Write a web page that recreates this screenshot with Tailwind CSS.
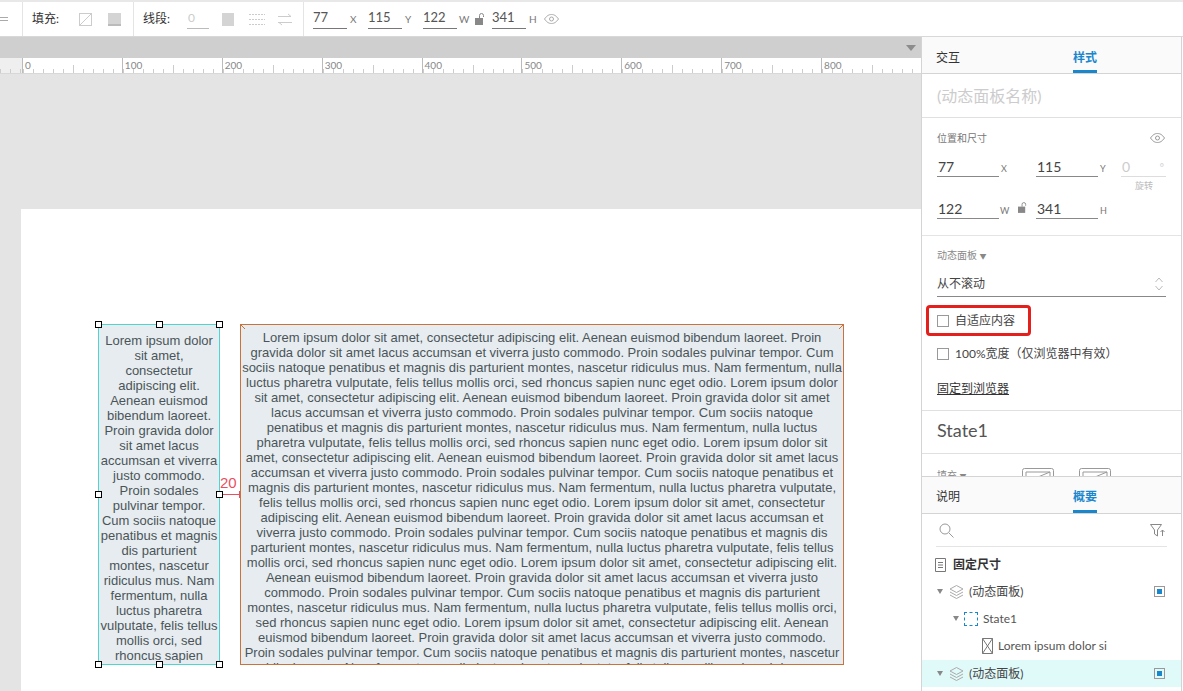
<!DOCTYPE html>
<html lang="zh-CN">
  <head>
    <meta charset="UTF-8" />
    <title>固定尺寸</title>
    <script src="https://cdn.jsdelivr.net/npm/@tailwindcss/browser@4"></script>
  </head>
  <body class="w-[1183px] h-[691px] overflow-hidden bg-white font-['Lato','Noto_Sans_CJK_SC',sans-serif] text-[#333]">
    <!-- toolbar -->
    <div class="h-[37px] border-t-2 border-t-[#e8e8e8] border-b border-b-[#d8d8d8] flex items-center text-[12px]">
      <div class="w-[23px] h-full border-r border-[#e4e4e4] flex flex-col justify-center gap-[2px]">
        <div class="w-[8px] h-px bg-[#aaa]"></div>
        <div class="w-[8px] h-px bg-[#aaa]"></div>
      </div>
      <div class="w-[111px] h-full border-r border-[#e4e4e4] flex items-center pl-[9px]">
        <span class="w-[47px]">填充:</span>
        <svg class="w-[13px] h-[13px]" viewBox="0 0 13 13"><rect x=".5" y=".5" width="12" height="12" fill="none" stroke="#ccc"/><path d="M1 12 12 1" stroke="#ccc"/></svg>
        <div class="w-[13px] h-[13px] ml-[16px] bg-[#d4d4d4] border-b-2 border-[#bbb]"></div>
      </div>
      <div class="w-[170px] h-full border-r border-[#e4e4e4] flex items-center pl-[9px]">
        <span class="w-[44px]">线段:</span>
        <div class="w-[22px] h-[19px] border-b border-[#bbb] text-[#ccc] leading-[15px] pl-[1px]">0</div>
        <div class="w-[12px] h-[13px] ml-[13px] bg-[#d4d4d4]"></div>
        <svg class="w-[16px] h-[13px] ml-[15px]" viewBox="0 0 16 13"><path d="M0 1.5h16M0 6.5h16M0 11.5h16" stroke="#ccc" stroke-dasharray="2 1"/></svg>
        <svg class="w-[14px] h-[13px] ml-[13px]" viewBox="0 0 14 13" fill="none" stroke="#ccc"><path d="M0 3.5h13M10 1l3 2.5M0 9.5h14M1 9.5l3 2.5"/></svg>
      </div>
      <div class="flex items-center pl-[9px] text-[#555] text-[13px]">
        <div class="w-[34px] h-[20px] border-b border-[#777] leading-[16px]">77</div>
        <span class="w-[21px] pl-[3px] text-[10px] text-[#777]">X</span>
        <div class="w-[34px] h-[20px] border-b border-[#777] leading-[16px]">115</div>
        <span class="w-[21px] pl-[3px] text-[10px] text-[#777]">Y</span>
        <div class="w-[34px] h-[20px] border-b border-[#777] leading-[16px]">122</div>
        <span class="w-[18px] pl-[2px] text-[10px] text-[#777]">W</span>
        <svg class="w-[10px] h-[12px] mr-[7px]" viewBox="0 0 10 12"><rect x="0" y="5" width="8" height="7" fill="#888"/><path d="M4.5 5V2.5a2 2 0 0 1 4 0V4" fill="none" stroke="#888"/></svg>
        <div class="w-[34px] h-[20px] border-b border-[#777] leading-[16px]">341</div>
        <span class="w-[18px] pl-[3px] text-[10px] text-[#777]">H</span>
        <svg class="w-[15px] h-[10px]" viewBox="0 0 15 10" fill="none" stroke="#aaa"><path d="M.5 5C3 1.5 5 .5 7.500 .5S12 1.500 14.500 5C12 8.500 10 9.500 7.500 9.500S3 8.500 .5 5Z"/><circle cx="7.500" cy="5" r="2"/></svg>
      </div>
    </div>

    <div class="flex h-[654px]">
      <!-- canvas side -->
      <div class="w-[922px] flex flex-col border-r border-[#d4d4d4]">
        <div class="h-[21px] bg-[#cfcfcf] flex justify-end items-center pr-[5px]">
          <div class="w-0 h-0 border-x-[5px] border-x-transparent border-t-[6px] border-t-[#8c8c8c]"></div>
        </div>
        <!-- ruler -->
        <div class="h-[16px] flex border-b border-[#d8d8d8] text-[10px] text-[#888] leading-[14px]">
          <div class="w-[22px] bg-[#efefef] bg-[repeating-linear-gradient(90deg,#ccc_0,#ccc_1px,transparent_1px,transparent_10px)] bg-[length:100%_4px] bg-bottom bg-no-repeat"></div>
          <div class="w-[100px] pl-[2px] border-l border-[#bbb] bg-[linear-gradient(#ccc,#ccc),repeating-linear-gradient(90deg,#ccc_0,#ccc_1px,transparent_1px,transparent_10px)] bg-[length:1px_8px,100%_4px] bg-[position:50px_bottom,left_bottom] bg-no-repeat">0</div>
          <div class="w-[100px] pl-[2px] border-l border-[#bbb] bg-[linear-gradient(#ccc,#ccc),repeating-linear-gradient(90deg,#ccc_0,#ccc_1px,transparent_1px,transparent_10px)] bg-[length:1px_8px,100%_4px] bg-[position:50px_bottom,left_bottom] bg-no-repeat">100</div>
          <div class="w-[100px] pl-[2px] border-l border-[#bbb] bg-[linear-gradient(#ccc,#ccc),repeating-linear-gradient(90deg,#ccc_0,#ccc_1px,transparent_1px,transparent_10px)] bg-[length:1px_8px,100%_4px] bg-[position:50px_bottom,left_bottom] bg-no-repeat">200</div>
          <div class="w-[100px] pl-[2px] border-l border-[#bbb] bg-[linear-gradient(#ccc,#ccc),repeating-linear-gradient(90deg,#ccc_0,#ccc_1px,transparent_1px,transparent_10px)] bg-[length:1px_8px,100%_4px] bg-[position:50px_bottom,left_bottom] bg-no-repeat">300</div>
          <div class="w-[100px] pl-[2px] border-l border-[#bbb] bg-[linear-gradient(#ccc,#ccc),repeating-linear-gradient(90deg,#ccc_0,#ccc_1px,transparent_1px,transparent_10px)] bg-[length:1px_8px,100%_4px] bg-[position:50px_bottom,left_bottom] bg-no-repeat">400</div>
          <div class="w-[100px] pl-[2px] border-l border-[#bbb] bg-[linear-gradient(#ccc,#ccc),repeating-linear-gradient(90deg,#ccc_0,#ccc_1px,transparent_1px,transparent_10px)] bg-[length:1px_8px,100%_4px] bg-[position:50px_bottom,left_bottom] bg-no-repeat">500</div>
          <div class="w-[100px] pl-[2px] border-l border-[#bbb] bg-[linear-gradient(#ccc,#ccc),repeating-linear-gradient(90deg,#ccc_0,#ccc_1px,transparent_1px,transparent_10px)] bg-[length:1px_8px,100%_4px] bg-[position:50px_bottom,left_bottom] bg-no-repeat">600</div>
          <div class="w-[100px] pl-[2px] border-l border-[#bbb] bg-[linear-gradient(#ccc,#ccc),repeating-linear-gradient(90deg,#ccc_0,#ccc_1px,transparent_1px,transparent_10px)] bg-[length:1px_8px,100%_4px] bg-[position:50px_bottom,left_bottom] bg-no-repeat">700</div>
          <div class="w-[100px] pl-[2px] border-l border-[#bbb] bg-[linear-gradient(#ccc,#ccc),repeating-linear-gradient(90deg,#ccc_0,#ccc_1px,transparent_1px,transparent_10px)] bg-[length:1px_8px,100%_4px] bg-[position:50px_bottom,left_bottom] bg-no-repeat">800</div>
        </div>
        <!-- page area -->
        <div class="flex-1 bg-[#e4e4e4] pt-[135px] pl-[21px]">
          <div class="relative h-[482px] bg-white overflow-hidden font-['Liberation_Sans',sans-serif] text-[13px] leading-[15px] text-[#4b5459] text-center">
            <!-- selected panel -->
            <div class="absolute left-[77px] top-[115px] w-[122px] h-[341px] bg-[#e6ecef] border border-[#4dd6cf] pt-[8px] overflow-hidden whitespace-nowrap">
              Lorem ipsum dolor<br>sit amet,<br>consectetur<br>adipiscing elit.<br>Aenean euismod<br>bibendum laoreet.<br>Proin gravida dolor<br>sit amet lacus<br>accumsan et viverra<br>justo commodo.<br>Proin sodales<br>pulvinar tempor.<br>Cum sociis natoque<br>penatibus et magnis<br>dis parturient<br>montes, nascetur<br>ridiculus mus. Nam<br>fermentum, nulla<br>luctus pharetra<br>vulputate, felis tellus<br>mollis orci, sed<br>rhoncus sapien
            </div>
            <!-- wide panel -->
            <div class="absolute left-[219px] top-[115px] w-[604px] h-[341px] bg-[#e6ecef] border border-[#c8733c] pt-[5px] overflow-hidden whitespace-nowrap">
              Lorem ipsum dolor sit amet, consectetur adipiscing elit. Aenean euismod bibendum laoreet. Proin<br>
              gravida dolor sit amet lacus accumsan et viverra justo commodo. Proin sodales pulvinar tempor. Cum<br>
              sociis natoque penatibus et magnis dis parturient montes, nascetur ridiculus mus. Nam fermentum, nulla<br>
              luctus pharetra vulputate, felis tellus mollis orci, sed rhoncus sapien nunc eget odio. Lorem ipsum dolor<br>
              sit amet, consectetur adipiscing elit. Aenean euismod bibendum laoreet. Proin gravida dolor sit amet<br>
              lacus accumsan et viverra justo commodo. Proin sodales pulvinar tempor. Cum sociis natoque<br>
              penatibus et magnis dis parturient montes, nascetur ridiculus mus. Nam fermentum, nulla luctus<br>
              pharetra vulputate, felis tellus mollis orci, sed rhoncus sapien nunc eget odio. Lorem ipsum dolor sit<br>
              amet, consectetur adipiscing elit. Aenean euismod bibendum laoreet. Proin gravida dolor sit amet lacus<br>
              accumsan et viverra justo commodo. Proin sodales pulvinar tempor. Cum sociis natoque penatibus et<br>
              magnis dis parturient montes, nascetur ridiculus mus. Nam fermentum, nulla luctus pharetra vulputate,<br>
              felis tellus mollis orci, sed rhoncus sapien nunc eget odio. Lorem ipsum dolor sit amet, consectetur<br>
              adipiscing elit. Aenean euismod bibendum laoreet. Proin gravida dolor sit amet lacus accumsan et<br>
              viverra justo commodo. Proin sodales pulvinar tempor. Cum sociis natoque penatibus et magnis dis<br>
              parturient montes, nascetur ridiculus mus. Nam fermentum, nulla luctus pharetra vulputate, felis tellus<br>
              mollis orci, sed rhoncus sapien nunc eget odio. Lorem ipsum dolor sit amet, consectetur adipiscing elit.<br>
              Aenean euismod bibendum laoreet. Proin gravida dolor sit amet lacus accumsan et viverra justo<br>
              commodo. Proin sodales pulvinar tempor. Cum sociis natoque penatibus et magnis dis parturient<br>
              montes, nascetur ridiculus mus. Nam fermentum, nulla luctus pharetra vulputate, felis tellus mollis orci,<br>
              sed rhoncus sapien nunc eget odio. Lorem ipsum dolor sit amet, consectetur adipiscing elit. Aenean<br>
              euismod bibendum laoreet. Proin gravida dolor sit amet lacus accumsan et viverra justo commodo.<br>
              Proin sodales pulvinar tempor. Cum sociis natoque penatibus et magnis dis parturient montes, nascetur<br>
              ridiculus mus. Nam fermentum, nulla luctus pharetra vulputate, felis tellus mollis orci, sed rhoncus
            </div>
            <!-- corner marks -->
            <svg class="absolute left-[220px] top-[116px] w-[4px] h-[4px]" viewBox="0 0 4 4"><path d="M0 0 4 4" stroke="#c8733c"/></svg>
            <svg class="absolute left-[818px] top-[116px] w-[4px] h-[4px]" viewBox="0 0 4 4"><path d="M4 0 0 4" stroke="#c8733c"/></svg>
            <!-- spacing marker -->
            <div class="absolute left-[199px] top-[266px] text-[15px] leading-[16px] text-[#e8505f]">20</div>
            <div class="absolute left-[199px] top-[285px] w-[20px] h-px bg-[#e8505f]"></div>
            <div class="absolute left-[218px] top-[282px] w-px h-[7px] bg-[#e8505f]"></div>
            <!-- handles -->
            <div class="absolute left-[74px] top-[112px] w-[7px] h-[7px] bg-white border border-black"></div>
            <div class="absolute left-[135px] top-[112px] w-[7px] h-[7px] bg-white border border-black"></div>
            <div class="absolute left-[195px] top-[112px] w-[7px] h-[7px] bg-white border border-black"></div>
            <div class="absolute left-[74px] top-[282px] w-[7px] h-[7px] bg-white border border-black"></div>
            <div class="absolute left-[195px] top-[282px] w-[7px] h-[7px] bg-white border border-black"></div>
            <div class="absolute left-[74px] top-[452px] w-[7px] h-[7px] bg-white border border-black"></div>
            <div class="absolute left-[135px] top-[452px] w-[7px] h-[7px] bg-white border border-black"></div>
            <div class="absolute left-[195px] top-[452px] w-[7px] h-[7px] bg-white border border-black"></div>
          </div>
        </div>
      </div>

      <!-- right side -->
      <div class="w-[260px] border-r border-[#d4d4d4] flex flex-col text-[12px]">
        <div class="h-[439px] overflow-hidden">
          <div class="h-[37px] bg-[#fafafa] border-b border-[#d4d4d4] flex text-[12px] pl-[14px] whitespace-nowrap">
            <div class="w-[137px] pt-[12px]">交互</div>
            <div class="w-[24px] pt-[12px] h-[36px] border-b-[3px] border-[#1a87cd] text-[#1a87cd] font-bold">样式</div>
          </div>
          <div class="h-[44px] border-b border-[#e0e0e0] pl-[15px] pt-[10px] text-[16px] text-[#ccc]">(动态面板名称)</div>
          <div class="h-[118px] border-b border-[#e4e4e4] px-[15px] pt-[14px]">
            <div class="flex justify-between items-center text-[10px] text-[#777] h-[12px]">
              <span>位置和尺寸</span>
              <svg class="w-[15px] h-[10px] mr-[1px]" viewBox="0 0 15 10" fill="none" stroke="#999"><path d="M.5 5C3 1.500 5 .5 7.500 .5S12 1.500 14.500 5C12 8.500 10 9.500 7.500 9.500S3 8.500 .5 5Z"/><circle cx="7.500" cy="5" r="2"/></svg>
            </div>
            <div class="flex mt-[9px] h-[24px] text-[14px] text-[#444]">
              <div class="w-[62px] border-b border-[#888] leading-[28px] pl-[1px]">77</div>
              <span class="w-[37px] pl-[2px] pt-[9px] text-[9px] text-[#777]">X</span>
              <div class="w-[62px] border-b border-[#888] leading-[28px] pl-[1px]">115</div>
              <span class="w-[23px] pl-[2px] pt-[9px] text-[9px] text-[#777]">Y</span>
              <div class="w-[45px] border-b border-[#ddd] leading-[28px] pl-[1px] text-[#ccc] flex justify-between pr-[2px]"><span>0</span><span class="text-[10px]">°</span></div>
            </div>
            <div class="text-right text-[9px] text-[#bbb] leading-[10px] mt-[4px] pr-[13px]">旋转</div>
            <div class="flex mt-[4px] h-[24px] text-[14px] text-[#444]">
              <div class="w-[62px] border-b border-[#888] leading-[28px] pl-[1px]">122</div>
              <span class="w-[19px] pl-[1px] pt-[9px] text-[9px] text-[#777]">W</span>
              <svg class="w-[9px] h-[11px] mt-[7px] mr-[9px]" viewBox="0 0 10 12"><rect x="0" y="5" width="8" height="7" fill="#888"/><path d="M4.500 5V2.500a2 2 0 0 1 4 0V4" fill="none" stroke="#888"/></svg>
              <div class="w-[62px] border-b border-[#888] leading-[28px] pl-[1px]">341</div>
              <span class="pl-[2px] pt-[9px] text-[9px] text-[#777]">H</span>
            </div>
          </div>
          <div class="relative h-[175px] border-b border-[#e0e0e0] pl-[15px] pt-[13px]">
            <div class="text-[10px] text-[#888] leading-[13px]">动态面板 <span class="text-[7px]">▼</span></div>
            <div class="w-[229px] h-[26px] mt-[8px] border-b border-[#888] flex justify-between items-center text-[12px] text-[#444] pr-[3px]">
              <span>从不滚动</span>
              <svg class="w-[8px] h-[14px]" viewBox="0 0 8 14" fill="none" stroke="#bbb"><path d="M.5 5 4 1l3.500 4M.5 9 4 13l3.500-4"/></svg>
            </div>
            <div class="flex items-center h-[20px] mt-[14px] text-[#444]">
              <div class="w-[12px] h-[12px] border border-[#999] mr-[6px]"></div>
              <span class="text-[12px]">自适应内容</span>
            </div>
            <div class="flex items-center h-[20px] mt-[13px] text-[#444]">
              <div class="w-[12px] h-[12px] border border-[#999] mr-[6px]"></div>
              <span class="text-[12px]">100%宽度（仅浏览器中有效）</span>
            </div>
            <div class="mt-[16px] underline text-[12px] text-[#333]">固定到浏览器</div>
            <!-- red highlight -->
            <div class="absolute left-[4px] top-[69px] w-[105px] h-[31px] border-[3px] border-[#e3201b] rounded-[4px]"></div>
          </div>
          <div class="h-[43px] border-b border-[#e0e0e0] pl-[15px] pt-[7px] text-[18px] text-[#555] leading-[24px]">State1</div>
          <div class="flex pl-[15px] pt-[14px] text-[10px] text-[#888]">
            <span class="w-[85px]">填充 <span class="text-[7px]">▼</span></span>
            <svg class="w-[32px] h-[16px] mr-[25px]" viewBox="0 0 32 16" fill="none" stroke="#999"><rect x=".5" y=".5" width="31" height="20" rx="2"/><path d="M4 4h24v16H4zM4 14 28 4"/></svg>
            <svg class="w-[32px] h-[16px]" viewBox="0 0 32 16" fill="none" stroke="#999"><rect x=".5" y=".5" width="31" height="20" rx="2"/><path d="M4 4h24v16H4zM4 14 28 4"/></svg>
          </div>
        </div>

        <!-- outline panel -->
        <div class="flex-1 border-t border-[#d4d4d4] overflow-hidden">
          <div class="h-[37px] bg-[#fafafa] border-b border-[#d4d4d4] flex text-[12px] pl-[14px] whitespace-nowrap">
            <div class="w-[137px] pt-[11px]">说明</div>
            <div class="w-[24px] pt-[11px] h-[36px] border-b-[3px] border-[#1a87cd] text-[#1a87cd] font-bold">概要</div>
          </div>
          <div class="mx-[14px] h-[33px] border-b border-[#e4e4e4] flex justify-between items-center pl-[3px] pr-[2px]">
            <svg class="w-[15px] h-[15px]" viewBox="0 0 15 15" fill="none" stroke="#999"><circle cx="6" cy="6" r="5"/><path d="m10 10 4.500 4.500"/></svg>
            <svg class="w-[15px] h-[13px]" viewBox="0 0 15 13" fill="none" stroke="#888"><path d="M.5 .5h11L7.500 6v6l-3-2V6zM12.500 12V6M10.500 8l2-2 2 2"/></svg>
          </div>
          <div class="h-[31px] pt-[4px] pl-[13px] flex items-center font-bold text-[#333]">
            <svg class="w-[11px] h-[14px] mr-[7px]" viewBox="0 0 11 14" fill="none" stroke="#777"><path d="M.5 .5h10v13H.5zM3 4.500h5M3 7h5M3 9.500h5"/></svg>
            固定尺寸
          </div>
          <div class="h-[27px] pl-[15px] flex items-center text-[12px] text-[#444]">
            <div class="w-0 h-0 border-x-[3.500px] border-x-transparent border-t-[5px] border-t-[#888] mr-[6px]"></div>
            <svg class="w-[15px] h-[14px] mr-[5px]" viewBox="0 0 15 14" fill="none" stroke="#aaa"><path d="M7.500 .5 14 4l-6.500 3.500L1 4zM1 7l6.500 3.500L14 7M1 10l6.500 3.500L14 10"/></svg>
            <span class="flex-1">(动态面板)</span>
            <div class="w-[11px] h-[11px] border border-[#999] p-[2px] mr-[16px]"><div class="w-full h-full bg-[#1a87cd]"></div></div>
          </div>
          <div class="h-[27px] pl-[31px] flex items-center text-[12px] text-[#555]">
            <div class="w-0 h-0 border-x-[3.500px] border-x-transparent border-t-[5px] border-t-[#888] mr-[5px]"></div>
            <div class="w-[14px] h-[14px] border border-dashed border-[#1a87cd] mr-[5px]"></div>
            State1
          </div>
          <div class="h-[27px] pl-[60px] flex items-center text-[12px] text-[#555]">
            <svg class="w-[11px] h-[16px] mr-[5px]" viewBox="0 0 11 16" fill="none" stroke="#777"><path d="M.5 .5h10v15H.5zM.5 .5l10 15M10.500 .5l-10 15"/></svg>
            Lorem ipsum dolor si
          </div>
          <div class="h-[27px] mt-[1px] pl-[15px] flex items-center text-[12px] text-[#444] bg-[#e0fafa]">
            <div class="w-0 h-0 border-x-[3.500px] border-x-transparent border-t-[5px] border-t-[#888] mr-[6px]"></div>
            <svg class="w-[15px] h-[14px] mr-[5px]" viewBox="0 0 15 14" fill="none" stroke="#aaa"><path d="M7.500 .5 14 4l-6.500 3.500L1 4zM1 7l6.500 3.500L14 7M1 10l6.500 3.500L14 10"/></svg>
            <span class="flex-1">(动态面板)</span>
            <div class="w-[11px] h-[11px] border border-[#999] p-[2px] mr-[16px]"><div class="w-full h-full bg-[#1a87cd]"></div></div>
          </div>
        </div>
      </div>
    </div>
  </body>
</html>
